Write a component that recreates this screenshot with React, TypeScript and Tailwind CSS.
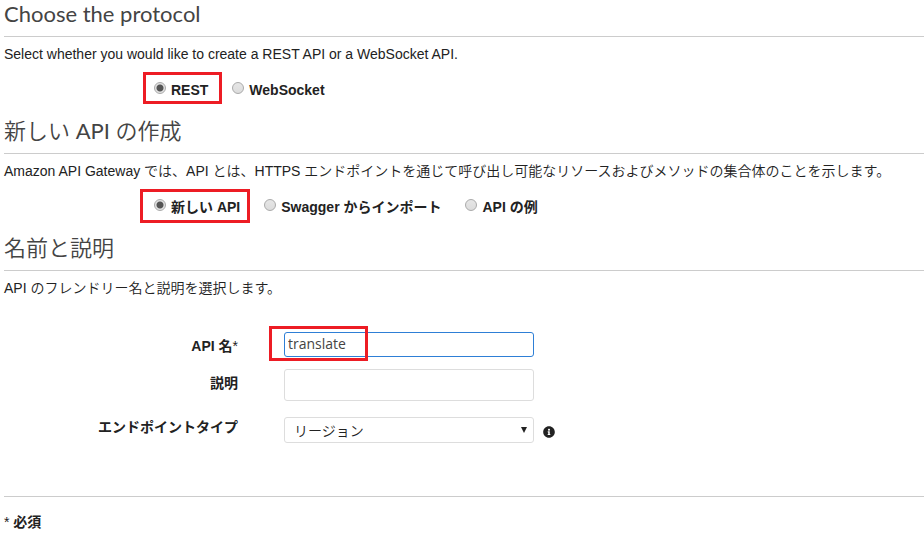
import type { ReactNode } from "react";
import { FaInfoCircle } from "react-icons/fa";

function Highlight({ className }: { className: string }) {
  return (
    <span
      aria-hidden="true"
      className={`pointer-events-none absolute border-3 border-[#ed1c24] ${className}`}
    />
  );
}

function Section({
  title,
  description,
  children,
}: {
  title: ReactNode;
  description: string;
  children: ReactNode;
}) {
  return (
    <section>
      <h2 className="h-[37px] border-b border-[#ccc] font-['Lato','Noto_Sans_CJK_JP',sans-serif] text-[22px] leading-7 font-normal text-[#444]">
        {title}
      </h2>
      <p className="pt-[7px] leading-5 font-[350]">{description}</p>
      {children}
    </section>
  );
}

function RadioOption({
  name,
  label,
  checked = false,
  highlight,
}: {
  name: string;
  label: string;
  checked?: boolean;
  highlight?: string;
}) {
  return (
    <label className="relative flex items-start gap-[5px] font-bold">
      <input
        type="radio"
        name={name}
        defaultChecked={checked}
        className="mt-[2px] size-3 appearance-none rounded-full border border-[#aaa] bg-linear-to-b from-[#e6e6e6] to-[#dcdcdc] checked:bg-[radial-gradient(circle,#555_3px,#e2e2e2_4px)]"
      />
      <span className="leading-5">{label}</span>
      {highlight && <Highlight className={highlight} />}
    </label>
  );
}

export default function App() {
  return (
    <main className="pl-1 font-['Liberation_Sans','Noto_Sans_CJK_JP',sans-serif] text-sm text-[#222]">
      <Section
        title="Choose the protocol"
        description="Select whether you would like to create a REST API or a WebSocket API."
      >
        <div className="mt-4 flex h-[37px] gap-6 pl-[150px]">
          <RadioOption
            name="protocol"
            label="REST"
            checked
            highlight="-left-[11px] -top-2 h-8 w-[79px]"
          />
          <RadioOption name="protocol" label="WebSocket" />
        </div>
      </Section>

      <Section
        title={
          <>
            <span className="font-[350]">新しい</span> API <span className="font-[350]">の作成</span>
          </>
        }
        description="Amazon API Gateway では、API とは、HTTPS エンドポイントを通じて呼び出し可能なリソースおよびメソッドの集合体のことを示します。"
      >
        <div className="mt-4 flex h-[37px] gap-6 pl-[150px]">
          <RadioOption
            name="source"
            label="新しい API"
            checked
            highlight="-left-[14px] -top-2 h-[34px] w-[110px]"
          />
          <RadioOption name="source" label="Swagger からインポート" />
          <RadioOption name="source" label="API の例" />
        </div>
      </Section>

      <Section
        title={<span className="font-[350]">名前と説明</span>}
        description="API のフレンドリー名と説明を選択します。"
      >
        <form className="mt-[34px] grid grid-cols-[234px_1fr] gap-x-[46px] border-b border-[#ccc] pb-[53px]">
          <label htmlFor="api-name" className="pt-1 text-right leading-5 font-bold">
            API 名<span className="font-normal">*</span>
          </label>
          <div className="relative h-[37px]">
            <input
              id="api-name"
              type="text"
              defaultValue="translate"
              className="block h-[25px] w-[250px] rounded-[3px] border border-[#2e7fd6] px-[3px] pb-[2px] font-['Open_Sans','Noto_Sans_CJK_JP',sans-serif] text-sm text-[#444] outline-none"
            />
            <Highlight className="-left-[15px] -top-[6px] h-[35px] w-[99px]" />
          </div>

          <label htmlFor="description" className="pt-1 text-right leading-5 font-bold">
            説明
          </label>
          <div className="h-12">
            <input
              id="description"
              type="text"
              className="block h-8 w-[250px] rounded-[3px] border border-[#ddd] px-[3px] outline-none"
            />
          </div>

          <label htmlFor="endpoint-type" className="text-right leading-5 font-bold">
            エンドポイントタイプ
          </label>
          <div className="flex items-center gap-[9px]">
            <div className="relative">
              <select
                id="endpoint-type"
                className="block h-[26px] w-[250px] appearance-none rounded-[3px] border border-[#ddd] bg-white px-[9px] pt-[2px] text-sm font-[350] text-[#222]"
              >
                <option>リージョン</option>
              </select>
              <svg
                aria-hidden="true"
                viewBox="0 0 6 6"
                className="pointer-events-none absolute top-[10px] right-[7px] size-[6px]"
              >
                <path d="M0 0h6L3 6z" fill="#222" />
              </svg>
            </div>
            <FaInfoCircle className="mt-1 size-3 text-[#222]" />
          </div>
        </form>
      </Section>

      <p className="pt-[15px] leading-5 font-bold">
        <span className="font-normal">*</span> 必須
      </p>
    </main>
  );
}
